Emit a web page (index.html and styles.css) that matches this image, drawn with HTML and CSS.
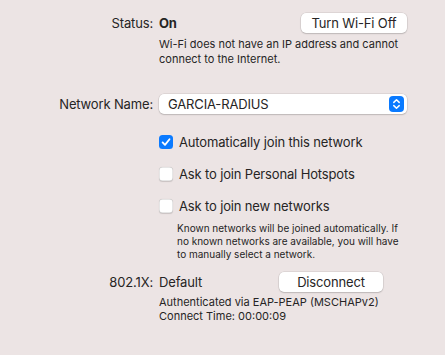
FILE: index.html
```html
<!DOCTYPE html>
<html lang="en">
<head>
  <meta charset="UTF-8" />
  <title>Wi-Fi</title>
  <link rel="stylesheet" href="styles.css">
</head>
<body>
  <div class="panel">
    <!-- Status -->
    <div class="label status-label">Status:</div>
    <div class="value row-between status-row">
      <strong>On</strong>
      <button class="btn btn-wifi">Turn Wi-Fi Off</button>
    </div>
    <p class="note note-status">Wi-Fi does not have an IP address and cannot<br>connect to the Internet.</p>

    <!-- Network name -->
    <div class="label name-label">Network Name:</div>
    <div class="select name-row">
      <span>GARCIA-RADIUS</span>
      <span class="stepper">
        <svg width="15" height="16" viewBox="0 0 15 16">
          <path d="M4.8 6.4 L7.5 3.8 L10.2 6.4 M4.8 9.6 L7.5 12.2 L10.2 9.6" fill="none" stroke="white" stroke-width="1.5" stroke-linecap="round" stroke-linejoin="round"/>
        </svg>
      </span>
    </div>

    <!-- Options -->
    <div class="checks">
      <label class="check">
        <span class="box checked">
          <svg width="14" height="14" viewBox="0 0 14 14">
            <path d="M3.6 7.4 L6 9.9 L10.5 4.2" fill="none" stroke="white" stroke-width="1.8" stroke-linecap="round" stroke-linejoin="round"/>
          </svg>
        </span>
        Automatically join this network
      </label>
      <label class="check"><span class="box"></span>Ask to join Personal Hotspots</label>
      <label class="check"><span class="box"></span>Ask to join new networks</label>
    </div>
    <p class="note note-help">Known networks will be joined automatically. If<br>no known networks are available, you will have<br>to manually select a network.</p>

    <!-- 802.1X -->
    <div class="label auth-label">802.1X:</div>
    <div class="value auth-row">
      <span class="auth-profile">Default</span>
      <button class="btn btn-disconnect">Disconnect</button>
    </div>
    <p class="note note-auth">Authenticated via EAP-PEAP (MSCHAPv2)<br>Connect Time: 00:00:09</p>
  </div>
</body>
</html>
```

FILE: styles.css
```css
* { margin: 0; padding: 0; box-sizing: border-box; }

body {
  background: #ece4e4;
  font-family: 'Inter', 'Liberation Sans', sans-serif;
  font-size: 13px;
  letter-spacing: -0.15px;
  color: #262424;
  height: 355px;
  overflow: hidden;
}

.panel {
  display: grid;
  grid-template-columns: 153px 248px;
  column-gap: 6px;
  padding-top: 13px;
  align-items: center;
}

.label {
  grid-column: 1;
  text-align: right;
  line-height: 20px;
}

.value,
.select,
.checks,
.note {
  grid-column: 2;
}

.row-between {
  display: flex;
  align-items: center;
  justify-content: space-between;
}

.status-row strong {
  font-weight: 700;
  line-height: 20px;
}

.btn {
  font: inherit;
  color: inherit;
  letter-spacing: inherit;
  white-space: nowrap;
  height: 20px;
  background: #fff;
  border: none;
  border-radius: 5px;
  box-shadow: 0 0 0 0.5px rgba(0, 0, 0, 0.12), 0 1px 1.5px rgba(0, 0, 0, 0.15);
  padding: 0;
}

.btn-wifi { width: 106px; }
.btn-disconnect { width: 104px; }

.note {
  font-size: 11px;
  line-height: 15px;
  letter-spacing: 0;
  white-space: nowrap;
}

.note-status { margin-top: 4px; }

.name-label,
.name-row { margin-top: 27px; }

.select {
  display: flex;
  align-items: center;
  justify-content: space-between;
  height: 20px;
  padding: 0 3px 0 9px;
  background: #fff;
  border-radius: 5px;
  box-shadow: 0 0 0 0.5px rgba(0, 0, 0, 0.12), 0 1px 1.5px rgba(0, 0, 0, 0.15);
}

.stepper {
  display: flex;
  width: 15px;
  height: 16px;
  background: #0a7aff;
  border-radius: 4px;
}

.checks {
  display: flex;
  flex-direction: column;
  gap: 16px;
  margin-top: 20px;
}

.check {
  display: flex;
  align-items: center;
  gap: 6px;
  line-height: 16px;
}

.box {
  display: flex;
  width: 14px;
  height: 14px;
  background: #fff;
  border-radius: 3.5px;
  box-shadow: inset 0 0 0 0.5px rgba(0, 0, 0, 0.2), 0 0.5px 1px rgba(0, 0, 0, 0.15);
}

.box.checked {
  background: #0a7aff;
  box-shadow: none;
}

.note-help {
  margin-top: 8px;
  padding-left: 18px;
  font-size: 10px;
  line-height: 13px;
}

.auth-label,
.auth-row { margin-top: 11px; }

.auth-row {
  display: flex;
  align-items: center;
}

.auth-profile { width: 120px; }

.note-auth {
  margin-top: 3px;
  line-height: 14px;
}
```
